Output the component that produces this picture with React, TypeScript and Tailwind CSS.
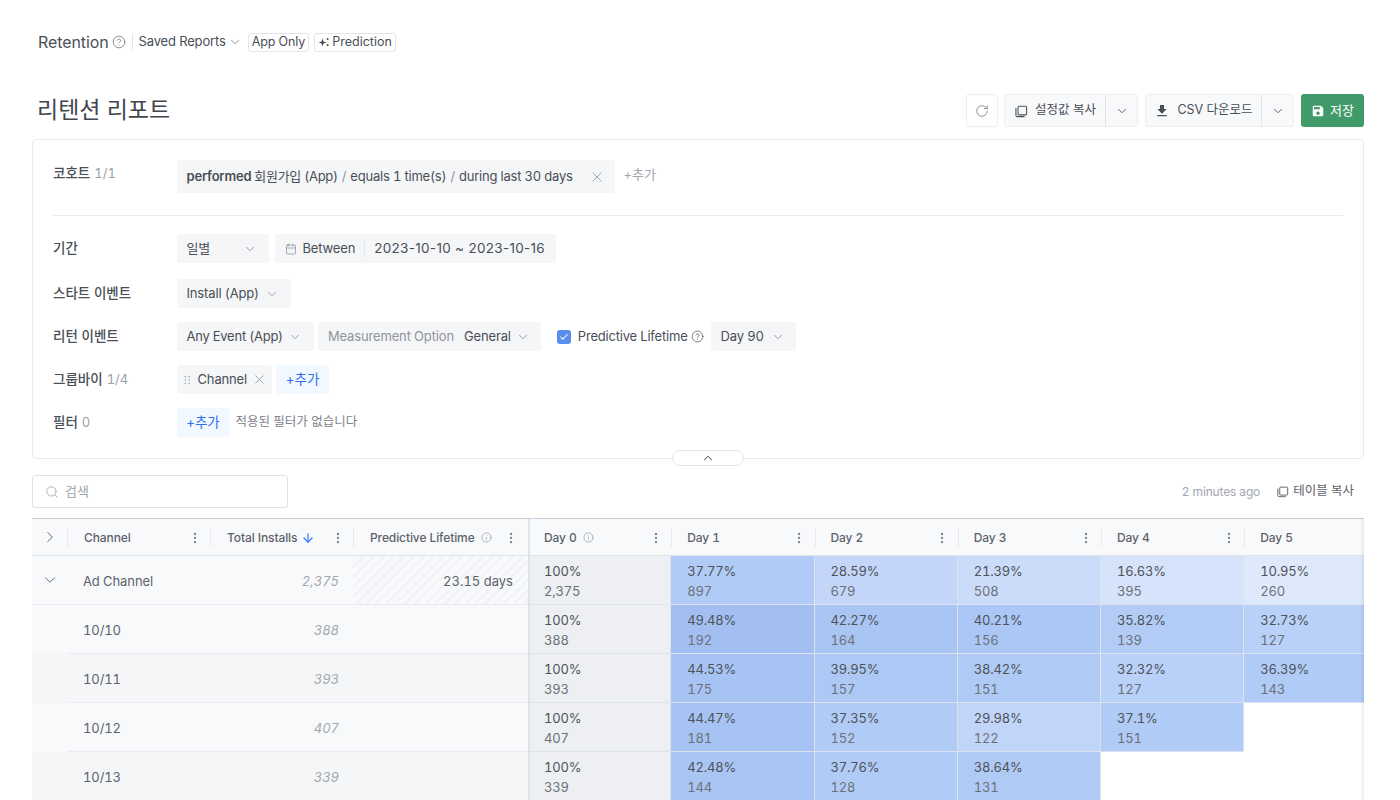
import { ChevronDown, ChevronRight, ChevronUp, CircleHelp, Calendar, Check, X, RotateCw, Search, Info, EllipsisVertical, ArrowDown } from 'lucide-react'
import { MdFileDownload, MdSave } from 'react-icons/md'
import type { ReactNode } from 'react'

const font = 'font-[Inter,"Noto_Sans_CJK_KR",sans-serif]'

function CopyIcon({ className }: { className?: string }) {
  return (
    <svg viewBox="0 0 16 16" fill="none" stroke="currentColor" strokeWidth="1.2" className={className}>
      <rect x="4.6" y="2.6" width="9.8" height="9.8" rx="1.2" />
      <path d="M2.2 4.5v8.3c0 .9.7 1.6 1.6 1.6h8.3" />
    </svg>
  )
}

function Sparkle() {
  return (
    <svg viewBox="0 0 12 12" fill="currentColor" className="h-3 w-3">
      <path d="M4.5 2.5l1 2.9 2.9 1-2.9 1-1 2.9-1-2.9-2.9-1 2.9-1z" />
      <circle cx="9.6" cy="3" r="1" />
      <circle cx="9.6" cy="9" r="1" />
    </svg>
  )
}

function Chip({ children, className = '' }: { children: ReactNode; className?: string }) {
  return <div className={`flex h-[29px] items-center whitespace-nowrap rounded-[3px] bg-[#f5f6f8] text-[13px] tracking-[-0.15px] text-[#4a4f57] ${className}`}>{children}</div>
}

function AddButton() {
  return <div className="flex h-[29px] w-[53px] items-center justify-center rounded-[3px] bg-[#f1f8ff] text-[13.5px] text-[#2f6fed]">+추가</div>
}

function Label({ children, count }: { children: ReactNode; count?: string }) {
  return (
    <div className="w-[123.5px] shrink-0 text-[13.5px] font-medium text-[#4a4f57]">
      {children}
      {count && <span className="ml-1 text-[13px] font-normal text-[#9a9fa7]">{count}</span>}
    </div>
  )
}

function Caret() {
  return <ChevronDown className="h-3.5 w-3.5 text-[#8f949c]" strokeWidth={1.5} />
}

function HeadCell({ label, info, sort, kebab = true, first, inner = 'pl-[15px] pr-[8.5px]' }: { label: string; info?: boolean; sort?: boolean; kebab?: boolean; first?: boolean; inner?: string }) {
  return (
    <div className={`flex h-[36px] items-center bg-[#f8f9fb] pt-[1px] text-[12px] font-medium tracking-[-0.1px] text-[#5e636b] ${first ? 'border-l-2 border-[#dfe2e8]' : ''}`}>
      <div className={`flex h-[19px] w-full items-center ${first ? '' : 'border-l border-[#e8eaee]'} ${inner}`}>
        <span>{label}</span>
        {sort && <ArrowDown className="ml-1 h-3.5 w-3.5 text-[#2f6fed]" strokeWidth={2} />}
        {info && <Info className="ml-1.5 h-[11px] w-[11px] text-[#8f949c]" strokeWidth={1.5} />}
        {kebab && <EllipsisVertical className="ml-auto h-3.5 w-3.5 text-[#7d828a]" strokeWidth={2} />}
      </div>
    </div>
  )
}

function Heat({ pct, n, bg, first }: { pct: string; n: string; bg: string; first?: boolean }) {
  return (
    <div className={`flex h-[49px] flex-col justify-center border-b border-r border-[#dde3ee] pt-[1px] text-[13px] leading-[20px] tracking-[-0.2px] text-[#4f5359] ${first ? 'pl-[14px]' : 'pl-4'} ${bg}`}>
      <span>{pct}</span>
      <span className="text-[#6c7179]">{n}</span>
    </div>
  )
}

const rows = [
  {
    name: 'Ad Channel', total: '2,375', expand: true, bg: 'bg-[#f8f9fb]', base: '2,375',
    cells: [
      ['37.77%', '897', 'bg-[#b0cbf6]'], ['28.59%', '679', 'bg-[#c3d6f9]'], ['21.39%', '508', 'bg-[#cbdcfa]'], ['16.63%', '395', 'bg-[#d5e3fb]'], ['10.95%', '260', 'bg-[#dfe9fc]'],
    ],
  },
  {
    name: '10/10', total: '388', bg: 'bg-[#f8f9fb]', base: '388',
    cells: [
      ['49.48%', '192', 'bg-[#a3bff2]'], ['42.27%', '164', 'bg-[#a9c5f4]'], ['40.21%', '156', 'bg-[#acc7f5]'], ['35.82%', '139', 'bg-[#b2ccf6]'], ['32.73%', '127', 'bg-[#b9d0f8]'],
    ],
  },
  {
    name: '10/11', total: '393', bg: 'bg-[#f5f6f8]', base: '393',
    cells: [
      ['44.53%', '175', 'bg-[#a7c3f3]'], ['39.95%', '157', 'bg-[#adc8f5]'], ['38.42%', '151', 'bg-[#afcaf5]'], ['32.32%', '127', 'bg-[#b9d0f8]'], ['36.39%', '143', 'bg-[#b0cbf6]'],
    ],
  },
  {
    name: '10/12', total: '407', bg: 'bg-[#f8f9fb]', base: '407',
    cells: [
      ['44.47%', '181', 'bg-[#a7c3f3]'], ['37.35%', '152', 'bg-[#b0cbf6]'], ['29.98%', '122', 'bg-[#c1d5f9]'], ['37.1%', '151', 'bg-[#b0cbf6]'], null,
    ],
  },
  {
    name: '10/13', total: '339', bg: 'bg-[#f5f6f8]', base: '339',
    cells: [
      ['42.48%', '144', 'bg-[#a9c5f4]'], ['37.76%', '128', 'bg-[#b0cbf6]'], ['38.64%', '131', 'bg-[#afcaf5]'], null, null,
    ],
  },
]

export default function App() {
  return (
    <div className={`h-[800px] overflow-hidden bg-white pl-8 pr-9 pt-[32px] tabular-nums ${font}`}>
      {/* top bar */}
      <div className="flex h-5 items-center pl-1.5">
        <span className="text-[16px] tracking-[-0.1px] text-[#4a4f57]">Retention</span>
        <CircleHelp className="ml-[3px] h-3.5 w-3.5 text-[#7d828a]" strokeWidth={1.5} />
        <span className="ml-[6px] h-4 w-px bg-[#e3e5e9]" />
        <span className="ml-1.5 text-[13px] tracking-[-0.15px] text-[#4a4f57]">Saved Reports</span>
        <ChevronDown className="ml-[2px] h-3.5 w-3.5 text-[#7d828a]" strokeWidth={1.5} />
        <span className="ml-[6px] flex h-[19px] items-center rounded-[3px] border border-[#e3e5e9] px-[3px] text-[12.5px] tracking-[-0.1px] text-[#4a4f57]">App Only</span>
        <span className="ml-[5px] flex h-[19px] items-center gap-[2px] rounded-[3px] border border-[#e3e5e9] pl-[3px] pr-[3px] text-[12.5px] text-[#4a4f57]">
          <Sparkle />
          Prediction
        </span>
      </div>

      {/* title + actions */}
      <div className="mt-[42px] flex h-[33px] items-center justify-between">
        <h1 className="pl-[5px] text-[23px] font-normal text-[#41464e]">리텐션 리포트</h1>
        <div className="flex items-center gap-[7px] text-[12.5px] text-[#4a4f57]">
          <div className="mr-[-1px] flex h-[33px] w-[32px] items-center justify-center rounded-[3px] border border-[#eceef1] bg-white">
            <RotateCw className="h-3.5 w-3.5 text-[#7d828a]" strokeWidth={1.5} />
          </div>
          <div className="flex h-[33px] items-center rounded-[3px] border border-[#eceef1] bg-[#f8f9fb]">
            <div className="flex h-full w-[101px] items-center justify-center gap-[7px] border-r border-[#e3e5e9]">
              <CopyIcon className="h-3.5 w-3.5" />
              설정값 복사
            </div>
            <div className="flex w-[31px] justify-center"><ChevronDown className="h-3.5 w-3.5" strokeWidth={1.5} /></div>
          </div>
          <div className="flex h-[33px] items-center rounded-[3px] border border-[#eceef1] bg-[#f8f9fb]">
            <div className="flex h-full w-[116px] items-center justify-center gap-[7px] border-r border-[#e3e5e9]">
              <MdFileDownload className="h-4 w-4" />
              CSV 다운로드
            </div>
            <div className="flex w-[31px] justify-center"><ChevronDown className="h-3.5 w-3.5" strokeWidth={1.5} /></div>
          </div>
          <div className="flex h-[33px] w-[63px] items-center justify-center gap-[5px] rounded-[3px] bg-[#419a69] text-[13px] text-white">
            <MdSave className="h-[14px] w-[14px]" />
            저장
          </div>
        </div>
      </div>

      {/* settings panel */}
      <div className="relative mt-[12px] h-[320px] rounded-[4px] border border-[#e9ebef] px-5 pt-[20px]">
        <div className="flex h-[33px] items-start">
          <div className="mt-[3px]"><Label count="1/1">코호트</Label></div>
          <div className="flex h-[33px] w-[438px] items-center whitespace-nowrap rounded-[3px] bg-[#f5f6f8] pl-2.5 text-[13px] tracking-[-0.2px] text-[#4a4f57]">
            <b className="font-semibold text-[#4a4f57]">performed</b>
            <span className="ml-[3px] tracking-[-0.3px]">회원가입 (App)</span>
            <span className="mx-[4px] text-[#8f949c]">/</span>
            <span>equals 1 time(s)</span>
            <span className="mx-[4px] text-[#8f949c]">/</span>
            <span>during last 30 days</span>
            <X className="ml-auto mr-[10px] h-4 w-4 text-[#8f949c]" strokeWidth={1.25} />
          </div>
          <span className="ml-[9px] mt-[5px] text-[13px] text-[#a3a7ae]">+추가</span>
        </div>

        <div className="mt-[22px] h-px bg-[#e9ebef]" />

        <div className="mt-[18px] flex items-center">
          <Label>기간</Label>
          <div className="flex gap-[6px]">
            <Chip className="w-[92px] justify-between pl-2.5 pr-3"><span>일별</span><Caret /></Chip>
            <Chip className="gap-[6px] pl-2.5 pr-[11px]">
              <Calendar className="h-3 w-3 text-[#8f949c]" strokeWidth={1.5} />
              <span>Between</span>
              <span className="mx-[3px] h-4 w-px bg-[#e3e5e9]" />
              <span className="text-[13.5px] normal-nums tracking-[0.3px]">2023-10-10 ~ 2023-10-16</span>
            </Chip>
          </div>
        </div>
        <div className="mt-[16px] flex flex-col gap-[14px]">
          <div className="flex items-center">
            <Label>스타트 이벤트</Label>
            <Chip className="gap-[6px] pl-2.5 pr-3"><span>Install (App)</span><Caret /></Chip>
          </div>
          <div className="flex items-center">
            <Label>리턴 이벤트</Label>
            <div className="flex items-center">
              <Chip className="gap-[5px] pl-2.5 pr-3"><span className="tracking-[-0.25px]">Any Event (App)</span><Caret /></Chip>
              <Chip className="ml-1 gap-[5px] pl-2.5 pr-[11px]">
                <span className="text-[#8f949c]">Measurement Option</span>
                <span className="ml-[5px]">General</span>
                <Caret />
              </Chip>
              <span className="ml-[16px] flex h-[14px] w-[14px] items-center justify-center rounded-[3px] bg-[#5b8def]">
                <Check className="h-2.5 w-2.5 text-white" strokeWidth={2.5} />
              </span>
              <span className="ml-[7px] text-[13px] tracking-[-0.2px] text-[#4a4f57]">Predictive Lifetime</span>
              <CircleHelp className="ml-[3px] h-[13px] w-[13px] text-[#5e636b]" strokeWidth={1.5} />
              <Chip className="ml-[7px] gap-[7px] pl-2.5 pr-[11px]"><span>Day 90</span><Caret /></Chip>
            </div>
          </div>
          <div className="flex items-center">
            <Label count="1/4">그룹바이</Label>
            <div className="flex gap-[4px]">
              <Chip className="pl-[7px] pr-[5px]">
                <svg viewBox="0 0 8 12" fill="#a3a7ae" className="mr-[7px] h-[10px] w-[7px]">
                  <circle cx="1.5" cy="2" r="1" /><circle cx="6" cy="2" r="1" />
                  <circle cx="1.5" cy="6" r="1" /><circle cx="6" cy="6" r="1" />
                  <circle cx="1.5" cy="10" r="1" /><circle cx="6" cy="10" r="1" />
                </svg>
                Channel
                <X className="ml-[5px] h-[15px] w-[15px] text-[#8f949c]" strokeWidth={1.25} />
              </Chip>
              <AddButton />
            </div>
          </div>
          <div className="flex items-center">
            <Label count="0">필터</Label>
            <AddButton />
            <span className="ml-[6px] text-[12.5px] text-[#7d828a]">적용된 필터가 없습니다</span>
          </div>
        </div>

        <div className="absolute -bottom-[8px] left-[639px] flex h-4 w-[72px] items-center justify-center rounded-full border border-[#e3e5e9] bg-white">
          <ChevronUp className="h-3.5 w-3.5 text-[#5e636b]" strokeWidth={1.75} />
        </div>
      </div>

      {/* search + meta */}
      <div className="mt-[16px] flex h-[33px] items-center justify-between">
        <div className="flex h-[33px] w-[256px] items-center gap-[6px] rounded-[3px] border border-[#dfe2e8] pl-3 text-[13px] text-[#a3a7ae]">
          <Search className="h-3.5 w-3.5" strokeWidth={1.5} />
          검색
        </div>
        <div className="flex items-center pr-[10px] text-[12.5px]">
          <span className="text-[12px] tracking-[-0.15px] text-[#a3a7ae]">2 minutes ago</span>
          <CopyIcon className="ml-4 h-[13px] w-[13px] text-[#5e636b]" />
          <span className="ml-[4px] text-[#5e636b]">테이블 복사</span>
        </div>
      </div>

      {/* table */}
      <div className="relative mt-[10px] overflow-hidden border-t border-[#c9ced8]">
        <div className="grid w-[1475px] grid-cols-[35px_143px_143px_175px_143.25px_143.25px_143.25px_143.25px_143.25px_143.25px] text-[13px] text-[#5e636b]">
          <div className="flex h-[36px] items-center justify-center bg-[#f8f9fb]">
            <ChevronRight className="h-[18px] w-[18px] text-[#5e636b]" strokeWidth={1.25} />
          </div>
          <HeadCell label="Channel" inner="pl-4 pr-[8px]" />
          <HeadCell label="Total Installs" sort inner="pl-4 pr-[8px]" />
          <HeadCell label="Predictive Lifetime" info inner="pl-4 pr-[10px]" />
          <HeadCell label="Day 0" info first inner="pl-[14px] pr-[8.5px]" />
          <HeadCell label="Day 1" />
          <HeadCell label="Day 2" />
          <HeadCell label="Day 3" />
          <HeadCell label="Day 4" />
          <HeadCell label="Day 5" kebab={false} />
          <div className="col-span-full h-px bg-[#dfe2e8]" />

          {rows.map((r) => (
            <div key={r.name} className="col-span-full grid grid-cols-subgrid">
              <div className={`flex h-[49px] items-center justify-center ${r.bg} ${r.expand ? 'border-b border-[#e9ebf0]' : ''}`}>
                {r.expand && <ChevronDown className="h-[18px] w-[18px] text-[#5e636b]" strokeWidth={1.25} />}
              </div>
              <div className={`flex h-[49px] items-center border-b border-[#e9ebf0] pl-4 pt-[3px] tracking-[-0.1px] ${r.bg}`}>{r.name}</div>
              <div className={`flex h-[49px] items-center justify-end border-b border-[#e9ebf0] pr-[14px] pt-[3px] italic text-[#a3a7ae] ${r.bg}`}>{r.total}</div>
              <div
                className={`flex h-[49px] items-center justify-end border-b border-[#e9ebf0] pr-[15px] pt-[3px] ${
                  r.expand
                    ? 'bg-[#f8f9fb] bg-[repeating-linear-gradient(135deg,#f1f2f5_0,#f1f2f5_2px,transparent_2px,transparent_7px)]'
                    : r.bg
                }`}
              >
                {r.expand && '23.15 days'}
              </div>
              <div className="h-[49px] border-l-2 border-[#dfe2e8]">
                <Heat pct="100%" n={r.base} bg="bg-[#edeff3]" first />
              </div>
              {r.cells.map((c, i) =>
                c ? <Heat key={i} pct={c[0]} n={c[1]} bg={c[2]} /> : <div key={i} className="h-[49px] bg-white" />,
              )}
            </div>
          ))}
        </div>
        <div className="absolute bottom-0 right-0 top-0 w-1 bg-gradient-to-r from-transparent to-[#00000014]" />
      </div>
    </div>
  )
}
